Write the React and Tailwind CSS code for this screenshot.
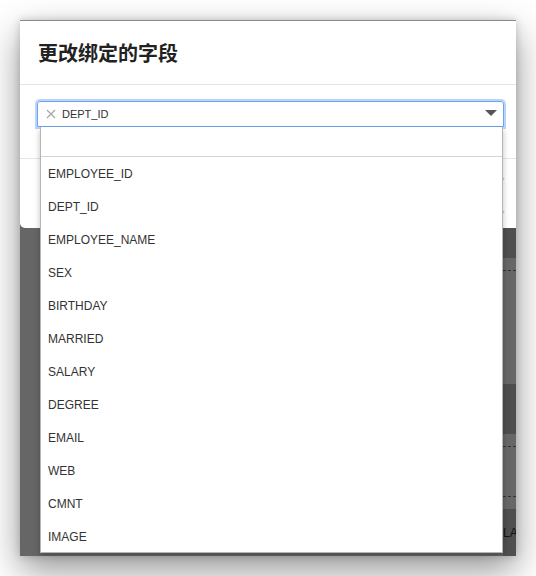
const fields = [
  'EMPLOYEE_ID',
  'DEPT_ID',
  'EMPLOYEE_NAME',
  'SEX',
  'BIRTHDAY',
  'MARRIED',
  'SALARY',
  'DEGREE',
  'EMAIL',
  'WEB',
  'CMNT',
  'IMAGE',
];

const sans = "font-['Liberation_Sans','Helvetica_Neue',Arial,sans-serif]";

export default function App() {
  return (
    <div className="w-[536px] h-[576px] bg-white p-[20px]">
      {/* window */}
      <div className="relative w-[496px] h-[536px] bg-[#636363] overflow-hidden flex flex-col shadow-[0_14px_34px_rgba(0,0,0,0.42),0_0_8px_rgba(0,0,0,0.18)]">
        <div className="h-[1px] bg-[#8a8a8a] shrink-0" />

        {/* modal row */}
        <div className="flex shrink-0">
          <div className="w-[2px] bg-[#5a5a5a]" />
          <div className="flex-1 h-[207px] bg-white rounded-bl-[5px] flex flex-col">
            {/* header */}
            <div className="h-[64px] border-b border-[#e3e5e8] flex items-center justify-between pl-[18px] pr-[12px]">
              <h4 className="text-[20px] leading-none font-bold text-[#222] font-['Noto_Sans_CJK_SC','Noto_Sans',sans-serif]">
                更改绑定的字段
              </h4>
              <svg width="14" height="14" viewBox="0 0 14 14" className="mt-[1px]">
                <path d="M2 2 L12 12 M12 2 L2 12" stroke="#555" strokeWidth="2.8" strokeLinecap="square" />
              </svg>
            </div>

            {/* body */}
            <div className="h-[73px] pt-[16px] pl-[17px]">
              <div className={`w-[467px] h-[26px] border border-[#6fa2f0] rounded-t-[3px] shadow-[0_0_0_2px_rgba(140,185,250,0.6)] flex items-center justify-between pl-[8px] pr-[6px] ${sans}`}>
                <div className="flex items-center gap-[6px]">
                  <svg width="10" height="10" viewBox="0 0 10 10">
                    <path d="M1 1 L9 9 M9 1 L1 9" stroke="#a6a6a6" strokeWidth="1.2" />
                  </svg>
                  <span className="text-[11px] text-[#333]">DEPT_ID</span>
                </div>
                <svg width="12" height="6" viewBox="0 0 12 6" className="mb-[2px]">
                  <path d="M0 0 H12 L6 6 Z" fill="#555" />
                </svg>
              </div>
            </div>

            {/* footer */}
            <div className="flex-1 border-t border-[#e3e5e8] flex justify-start pt-[19px] pl-[482px]">
              <div className="w-[40px] h-[35px] border-l border-[#777] rounded-l-[3px]" />
            </div>
          </div>
        </div>

        {/* backdrop below modal */}
        <div className="flex-1 flex">
          <div className="flex-1 bg-[#666]" />
          <div className={`w-[13px] flex flex-col ${sans}`}>
            <div className="h-[30px] bg-[#4f4f4f]" />
            <div className="h-[126px] bg-[#676767] pt-[12px]">
              <div className="border-t border-dashed border-[#333]" />
            </div>
            <div className="h-[50px] bg-[#4e4e4e]" />
            <div className="h-[75px] bg-[#676767] pt-[12px] flex flex-col gap-[49px]">
              <div className="border-t border-dashed border-[#333]" />
              <div className="border-t border-dashed border-[#333]" />
            </div>
            <div className="flex-1 bg-[#4f4f4f] pt-[18px] text-[12px] text-[#111] leading-none whitespace-nowrap">
              LA
            </div>
          </div>
        </div>

        {/* dropdown list */}
        <div className={`absolute left-[20px] top-[107px] w-[463px] h-[426px] bg-white border border-[#b5b5b5] border-t-0 shadow-[0_3px_6px_rgba(0,0,0,0.25)] flex flex-col ${sans}`}>
          <div className="h-[30px] border-b border-[#d4d4d4] shrink-0" />
          <ul className="flex flex-col">
            {fields.map((f) => (
              <li key={f} className="h-[33px] flex items-center pl-[7px] text-[12px] text-[#333]">
                {f}
              </li>
            ))}
          </ul>
        </div>
      </div>
    </div>
  );
}
